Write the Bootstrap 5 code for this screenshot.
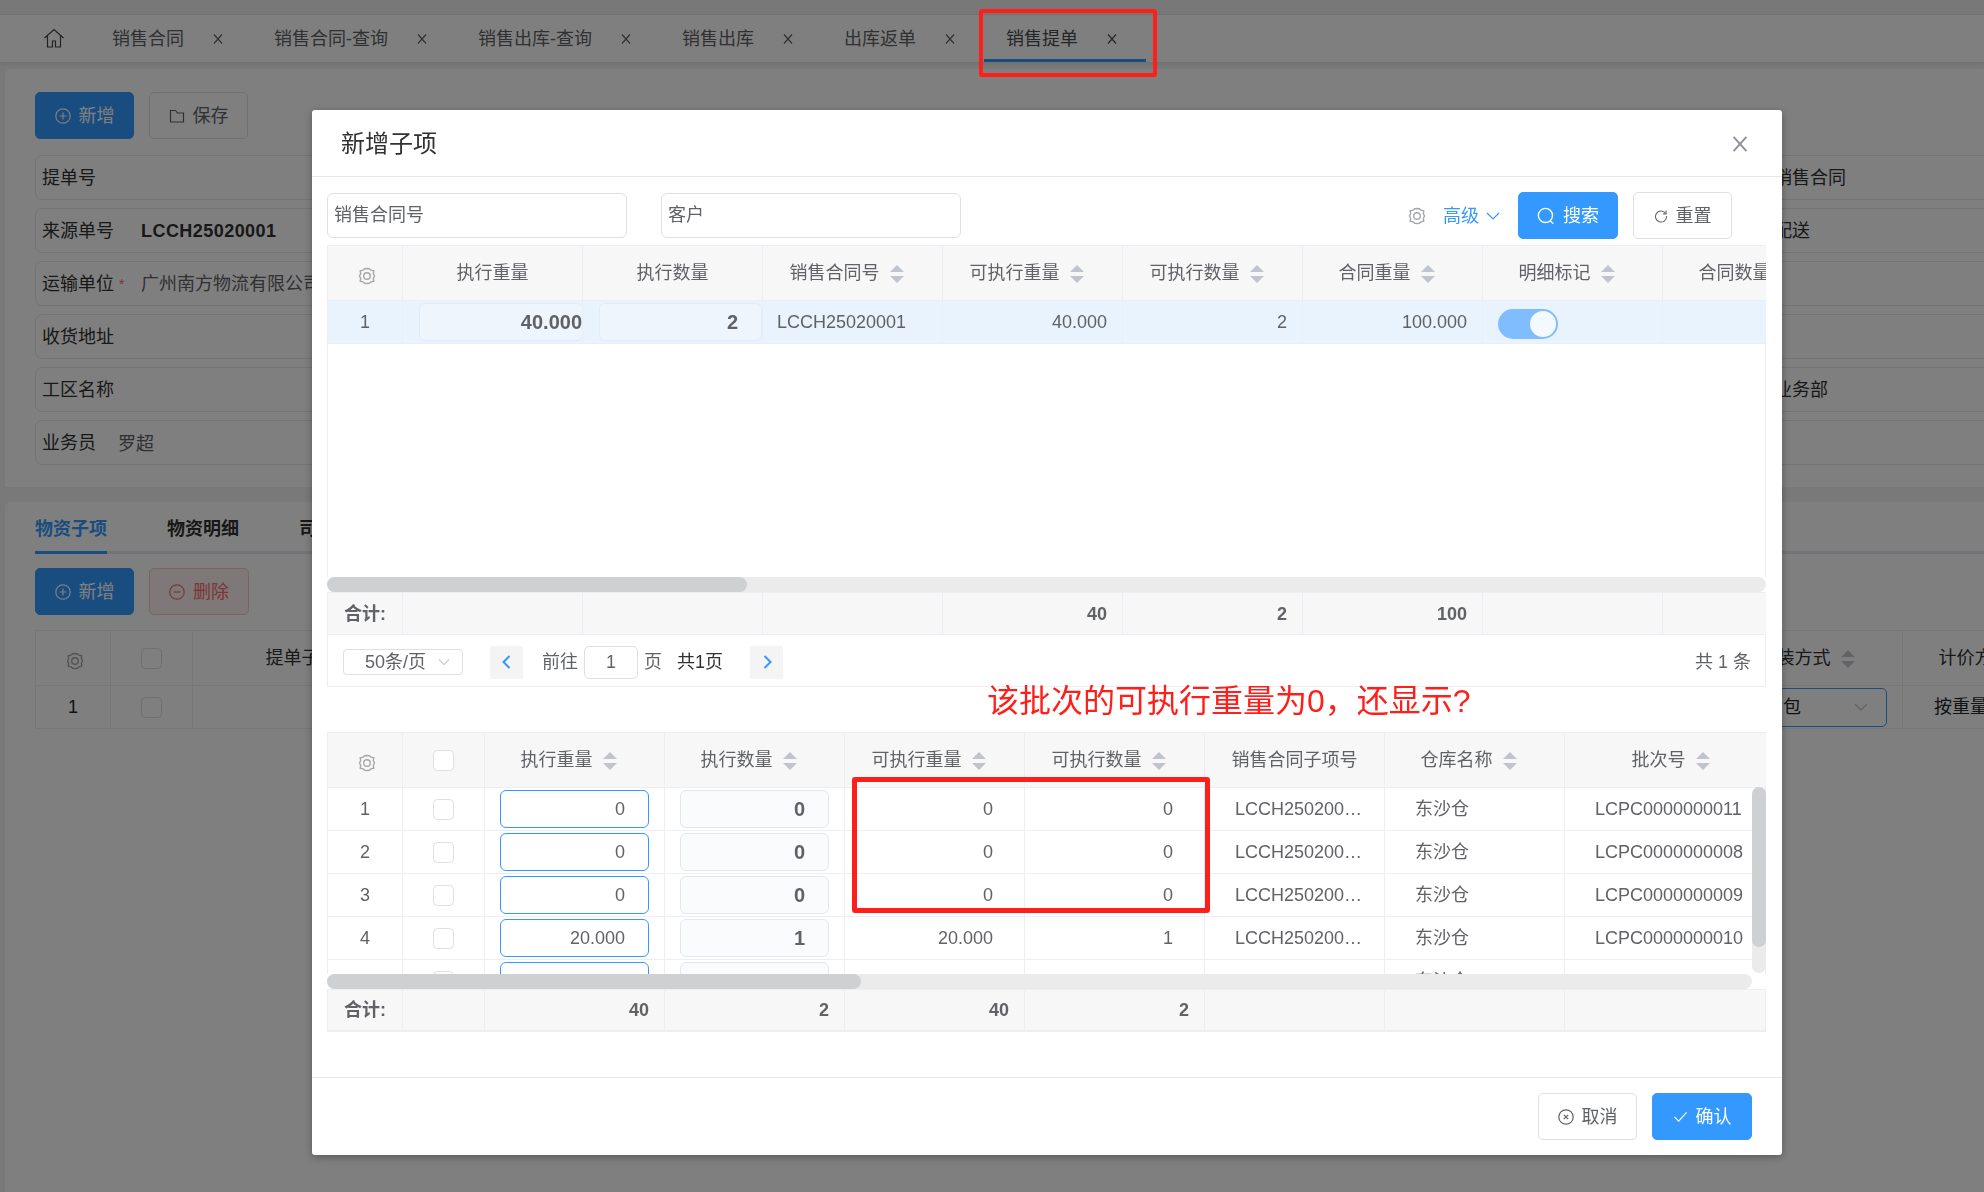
<!DOCTYPE html>
<html lang="zh-CN">
<head>
  <meta charset="UTF-8" />
  <meta name="viewport" content="width=device-width, initial-scale=1.0" />
  <title>销售提单</title>
  <link href="https://cdn.jsdelivr.net/npm/bootstrap@5.3.2/dist/css/bootstrap.min.css" rel="stylesheet">
  <style>
    body {
      font-family: "Liberation Sans", "Noto Sans CJK SC", sans-serif;
      font-size: 18px;
      line-height: 24px;
      color: #606266;
      background: #f0f2f1;
      height: 1192px;
      overflow: hidden;
    }
    svg.ico { fill: none; stroke: currentColor; stroke-width: 1.2; flex: none; }

    /* page behind the dialog */
    .top-strip { height: 15px; background: #f1f1f1; border-bottom: 1px solid #e6e6e6; }
    .page-tabs { height: 47px; padding-left: 43px; background: #fff; box-shadow: 0 2px 4px rgba(0,0,0,.08); flex-wrap: nowrap; align-items: stretch; }
    .page-tabs .home-ico { width: 22px; height: 22px; margin: 12px 25px 0 0; color: #444; }
    .page-tabs .nav-link { display: flex; align-items: center; height: 47px; padding: 0 29px 0 22px; color: #606266; }
    .page-tabs .nav-link svg { margin-left: 29px; width: 10px; height: 10px; }
    .page-tabs .nav-link.active { border-bottom: 3px solid #3399ff; padding-top: 3px; color: #4a4c50; }
    .sheet { margin-left: 5px; background: #fff; border-radius: 6px 0 0 0; }
    .sheet-head { height: 418px; margin-top: 7px; padding: 23px 0 0 30px; }
    .sheet-lines { height: 690px; margin-top: 15px; padding-left: 30px; overflow: hidden; }
    .act-row { display: flex; gap: 15px; }
    .sheet-lines .act-row { margin: 14px 0 15px; }
    .act-btn { display: inline-flex; align-items: center; justify-content: center; gap: 8px; width: 99px; height: 47px; padding: 2px 0 0; font-size: 18px; border-radius: 5px; border: 1px solid #dcdfe6; background: #fff; color: #606266; }
    .act-btn svg { margin-top: -2px; }
    .act-btn.act-sky { background: #3399ff; border-color: #3399ff; color: #fff; }
    .act-btn.act-wide { width: 100px; }
    .act-btn.act-danger { background: #fef0f0; border-color: #fbc4c4; color: #f56c6c; }
    .form-cell { display: flex; align-items: center; height: 45px; margin-bottom: 8px; padding-left: 6px; border: 1px solid #e4e7ed; border-radius: 7px; color: #303133; }
    .form-cell .cell-val { color: #606266; }
    .form-cell .cell-strong { margin-left: 27px; font-weight: 700; letter-spacing: .45px; color: #303133; }
    .form-cell .cell-low { margin: 3px 0 0 22px; }
    .form-left { width: 640px; }
    .form-right { width: 349px; }
    .form-right .form-cell { padding-left: 139px; border-radius: 0; border-width: 1px 0; }
    .star { width: 27px; padding-left: 5px; color: #f56c6c; font-size: 14px; }
    .line-tabs { height: 52px; border-bottom: 3px solid #e4e7ed; flex-wrap: nowrap; }
    .line-tabs .nav-link { padding: 15px 0 0; margin-right: 60px; height: 52px; font-weight: 700; color: #303133; }
    .line-tabs .nav-link.active { color: #3399ff; border-bottom: 3px solid #3399ff; }
    .back-grid { table-layout: fixed; width: 2047px; --bs-table-border-color: #ebeef5; }
    .back-pick { display: flex; align-items: center; justify-content: space-between; height: 39px; margin: 0 15px 0 20px; padding: 0 18px 0 39px; border: 1px solid #3399ff; border-radius: 5px; }
    .back-pick svg { color: #c0c4cc; }
    .cw-a { width: 75px; } .cw-b { width: 82px; } .cw-c { width: 180px; } .cw-d { width: 202px; }
    .cw-e { width: 236px; } .cw-f { width: 1294px; }

    /* dialog */
    .modal-backdrop.show { opacity: .5; }
    .modal-dialog.bill-dialog { width: 1470px; max-width: none; margin: 110px 0 0 312px; }
    .bill-dialog .modal-content { height: 1045px; border: 0; border-radius: 3px; box-shadow: 0 2px 8px rgba(0,0,0,.3); }
    .bill-dialog .modal-header { height: 67px; padding: 2px 34px 0 29px; border-bottom: 1px solid #e4e7ed; }
    .bill-dialog .modal-title { font-size: 24px; font-weight: 400; line-height: 32px; color: #303133; }
    .bill-dialog .modal-body { padding: 15px 16px 0 15px; }
    .bill-dialog .modal-footer { height: 78px; padding: 0 30px 0 0; border-top: 1px solid #e4e7ed; gap: 15px; }
    .bill-dialog .modal-footer > * { margin: 0; }
    .dlg-close { width: 16px; height: 16px; color: #8d9095; }
    .query-bar { height: 47px; margin-bottom: 6px; padding-right: 34px; }
    .query-input { width: 300px; height: 45px; padding: 0 6px; font-size: 18px; border: 1px solid #dcdfe6; border-radius: 6px; color: #606266; }
    .query-input + .query-input { margin-left: 34px; }
    .query-input::placeholder { color: #606266; opacity: 1; }
    .query-more { margin-left: 17px; color: #3399ff; }
    svg.query-more { margin-left: 7px; margin-right: 18px; }
    .query-bar .act-btn + .act-btn { margin-left: 15px; }
    svg.ico.gear { width: 18px; height: 18px; color: #a6a8ab; stroke-width: 1.4; }
    th svg.ico.gear { margin: 3px 0 0 3px; vertical-align: middle; }

    .grid-clip { overflow: hidden; position: relative; box-shadow: inset 1px 0 #ebeef5, inset -1px 0 #ebeef5; }
    .grid-clip.upper { height: 332px; }
    .grid-clip.lower { height: 242px; }
    .data-grid { table-layout: fixed; margin: 0; color: #606266; --bs-table-color: #606266; --bs-table-border-color: #ebeef5; }
    .upper .data-grid, .upper-sum .data-grid { width: 1515px; }
    .lower .data-grid, .lower-sum .data-grid { width: 1439px; }
    .data-grid th, .back-grid th { height: 55px; padding: 0; font-weight: 400; text-align: center; vertical-align: middle; background: #f7f7f7; color: #606266; }
    .data-grid th.th-batch { padding-left: 22px; }
    .back-grid th { background: #fff; color: #303133; }
    .data-grid td, .back-grid td { height: 43px; padding: 0 15px; vertical-align: middle; text-align: right; }
    .data-grid td.t-c, .back-grid td.t-c { padding: 0; text-align: center; }
    .data-grid td.t-l { padding: 0 20px 0 30px; text-align: left; }
    .back-grid td.cell-far { padding-left: 31px; text-align: left; }
    .upper tr.row-on td { background: #e9f3fd; }
    .upper tr.row-on td.pad-l { padding-left: 14px; text-align: left; }
    .lower td.pad-w { padding-right: 31px; }
    .sort { display: inline-flex; flex-direction: column; gap: 4px; margin: 0 12px 0 10px; vertical-align: middle; }
    .sort::before, .sort::after { content: ""; border: solid transparent; border-width: 0 7px; }
    .sort::before { border-bottom: 7px solid #c0c4cc; }
    .sort::after { border-top: 7px solid #c0c4cc; }
    .cell-input { height: 38px; padding: 0 23px 0 0; font-size: 18px; text-align: right; border-radius: 6px; color: #606266; }
    .cell-input.in-blue { border-color: #3399ff; }
    .cell-input.in-mute { border-color: #e4e7ed; background: #fafbfd; font-size: 20px; font-weight: 700; }
    .cell-input.in-row { width: calc(100% - 16px); margin-left: 16px; border-color: #e2ecf6; background: #eef5fd; font-size: 20px; font-weight: 700; }
    .cell-input.in-row.in-tight { width: calc(100% - 15px); padding-right: 0; }
    .cell-chk { width: 21px; height: 21px; margin: 2px 0 0; border-color: #dcdfe6; border-radius: 3px; }
    .tgl { display: block; position: relative; width: 60px; height: 30px; margin: 4px 0 0 1px; border-radius: 15px; background: #80bdff; }
    .tgl::after { content: ""; position: absolute; top: 2px; right: 2px; width: 26px; height: 26px; border-radius: 50%; background: #f4f9ff; }
    .bar-x { height: 15px; border-radius: 8px; background: #ebebeb; }
    .bar-x > div { height: 15px; border-radius: 8px; background: #cfd0d2; }
    .upper-bar > div { width: 420px; }
    .lower-bar { margin-right: 14px; }
    .lower-bar > div { width: 534px; }
    .bar-y { position: absolute; top: 55px; right: 0; width: 14px; height: 186px; border-radius: 7px; background: #ebebeb; }
    .bar-y > div { height: 160px; border-radius: 7px; background: #cfd0d2; }
    .sum-clip { overflow: hidden; }
    .sum-clip td { height: 42px; background: #f7f7f7; font-weight: 700; }
    .data-grid td.sum-head { padding: 0 0 0 16px; text-align: left; white-space: nowrap; }
    .lower-sum { border: solid #ebeef5; border-width: 0 1px 1px 0; }
    .lower-sum td { height: 41px; }
    .pager { height: 52px; padding: 3px 14px 0 15px; border: solid #ebeef5; border-width: 0 1px 1px 1px; }
    .pager-size { width: 120px; height: 26px; padding: 0 12px 0 21px; border: 1px solid #dcdfe6; border-radius: 4px; line-height: 24px; }
    .pager-size svg { width: 12px; height: 12px; color: #c0c4cc; }
    .pager-btn { display: flex; align-items: center; justify-content: center; width: 33px; height: 33px; margin-left: 27px; background: #f4f4f5; border-radius: 2px; color: #3399ff; }
    .pager-btn svg { width: 16px; height: 16px; stroke-width: 2; }
    .pager-lead { margin-left: 19px; }
    .pager-num { width: 54px; height: 33px; margin: 0 6px; padding: 0; font-size: 18px; text-align: center; border: 1px solid #dcdfe6; border-radius: 5px; color: #606266; }
    .pager-dark { margin-left: 15px; color: #303133; }
    .note-red { height: 45px; padding-left: 660px; font-size: 32px; line-height: 28px; color: #ff1f1a; white-space: nowrap; }

    /* the red frames drawn on top of the screenshot */
    .anno-tab, .anno-zero { position: fixed; z-index: 2000; border: 4px solid #ff1f1a; border-radius: 3px; }
    .anno-tab { left: 979px; top: 9px; width: 178px; height: 68px; }
    .anno-zero { left: 852px; top: 777px; width: 358px; height: 136px; border-width: 5px; }
  </style>
</head>
<body>
  <svg width="0" height="0" class="position-absolute">
    <symbol id="i-home" viewBox="0 0 22 22"><path d="M1.5 11 11 2.5l9.5 8.500M4.500 9v11h5v-6h3v6h5V9" /></symbol>
    <symbol id="i-x" viewBox="0 0 10 10"><path d="M1 .5l8 9M9 .5l-8 9" /></symbol>
    <symbol id="i-gear" viewBox="0 0 18 18"><path d="M16.500 9l-1.200 2.400.500 2.900-2.900.500L11.400 16.300 9 16.500l-2.400-.2-1.500-1.500-2.900-.5.500-2.900L1.500 9l1.200-2.400-.500-2.900 2.900-.500L6.600 1.700 9 1.500l2.400.2 1.500 1.500 2.900.5-.5 2.900z" /><circle cx="9" cy="9" r="3.300" /></symbol>
    <symbol id="i-plus" viewBox="0 0 16 16"><circle cx="8" cy="8" r="7.200" /><path d="M8 4.500v7M4.500 8h7" /></symbol>
    <symbol id="i-minus" viewBox="0 0 16 16"><circle cx="8" cy="8" r="7.200" /><path d="M4.500 8h7" /></symbol>
    <symbol id="i-close-c" viewBox="0 0 16 16"><circle cx="8" cy="8" r="7.200" /><path d="M5.800 5.800l4.400 4.400M10.200 5.800l-4.400 4.400" /></symbol>
    <symbol id="i-folder" viewBox="0 0 16 16"><path d="M1.500 2.500h5l2 2.500h6v9h-13z" /></symbol>
    <symbol id="i-search" viewBox="0 0 16 16"><circle cx="7.500" cy="7.500" r="6.300" /><path d="M11.800 12.300l2.700 2.700" /></symbol>
    <symbol id="i-redo" viewBox="0 0 16 16"><path d="M13.500 5.500A6.300 6.300 0 1 0 14.300 8" /><path d="M13.800 1.800v3.900H10" /></symbol>
    <symbol id="i-down" viewBox="0 0 14 14"><path d="M1 4l6 6 6-6" /></symbol>
    <symbol id="i-left" viewBox="0 0 16 16"><path d="M10.500 2 4.500 8l6 6" /></symbol>
    <symbol id="i-right" viewBox="0 0 16 16"><path d="M5.500 2l6 6-6 6" /></symbol>
    <symbol id="i-check" viewBox="0 0 16 16"><path d="M1.500 8.500l4.500 4.500 8.500-9.500" /></symbol>
  </svg>

  <div class="top-strip"></div>
  <ul class="nav page-tabs">
    <li><svg class="ico home-ico"><use href="#i-home" /></svg></li>
    <li class="nav-item"><a class="nav-link" href="#">销售合同<svg class="ico"><use href="#i-x" /></svg></a></li>
    <li class="nav-item"><a class="nav-link" href="#">销售合同-查询<svg class="ico"><use href="#i-x" /></svg></a></li>
    <li class="nav-item"><a class="nav-link" href="#">销售出库-查询<svg class="ico"><use href="#i-x" /></svg></a></li>
    <li class="nav-item"><a class="nav-link" href="#">销售出库<svg class="ico"><use href="#i-x" /></svg></a></li>
    <li class="nav-item"><a class="nav-link" href="#">出库返单<svg class="ico"><use href="#i-x" /></svg></a></li>
    <li class="nav-item"><a class="nav-link active" href="#">销售提单<svg class="ico"><use href="#i-x" /></svg></a></li>
  </ul>

  <div class="sheet sheet-head">
    <div class="act-row mb-3">
      <button class="btn act-btn act-sky" type="button"><svg class="ico" width="16" height="16"><use href="#i-plus" /></svg>新增</button>
      <button class="btn act-btn" type="button"><svg class="ico" width="16" height="16"><use href="#i-folder" /></svg>保存</button>
    </div>
    <div class="d-flex justify-content-between">
      <div class="form-left">
        <div class="form-cell">提单号</div>
        <div class="form-cell">来源单号<span class="cell-strong">LCCH25020001</span></div>
        <div class="form-cell">运输单位<span class="star">*</span><span class="cell-val">广州南方物流有限公司</span></div>
        <div class="form-cell">收货地址</div>
        <div class="form-cell">工区名称</div>
        <div class="form-cell">业务员<span class="cell-val cell-low">罗超</span></div>
      </div>
      <div class="form-right">
        <div class="form-cell">销售合同</div>
        <div class="form-cell">配送</div>
        <div class="form-cell"></div>
        <div class="form-cell"></div>
        <div class="form-cell">业务部</div>
        <div class="form-cell"></div>
      </div>
    </div>
  </div>

  <div class="sheet sheet-lines">
    <ul class="nav line-tabs">
      <li class="nav-item"><a class="nav-link active" href="#">物资子项</a></li>
      <li class="nav-item"><a class="nav-link" href="#">物资明细</a></li>
      <li class="nav-item"><a class="nav-link" href="#">司机信息</a></li>
    </ul>
    <div class="act-row">
      <button class="btn act-btn act-sky" type="button"><svg class="ico" width="16" height="16"><use href="#i-plus" /></svg>新增</button>
      <button class="btn act-btn act-danger act-wide" type="button"><svg class="ico" width="16" height="16"><use href="#i-minus" /></svg>删除</button>
    </div>
    <table class="table table-bordered back-grid">
      <colgroup><col class="cw-a"><col class="cw-b"><col class="cw-e"><col class="cw-f"><col class="cw-c"><col class="cw-c"></colgroup>
      <thead>
        <tr>
          <th><svg class="ico gear"><use href="#i-gear" /></svg></th>
          <th><input class="form-check-input cell-chk" type="checkbox"></th>
          <th>提单子项号</th>
          <th></th>
          <th>包装方式<span class="sort"></span></th>
          <th>计价方式<span class="sort"></span></th>
        </tr>
      </thead>
      <tbody>
        <tr>
          <td class="t-c">1</td>
          <td class="t-c"><input class="form-check-input cell-chk" type="checkbox"></td>
          <td></td>
          <td></td>
          <td class="t-c"><div class="back-pick">包<svg class="ico" width="14" height="14"><use href="#i-down" /></svg></div></td>
          <td class="cell-far">按重量</td>
        </tr>
      </tbody>
    </table>
  </div>

  <div class="modal-backdrop show"></div>
  <div class="modal d-block" tabindex="-1">
    <div class="modal-dialog bill-dialog">
      <div class="modal-content">
        <div class="modal-header justify-content-between">
          <h5 class="modal-title">新增子项</h5>
          <svg class="ico dlg-close"><use href="#i-x" /></svg>
        </div>
        <div class="modal-body">
          <div class="query-bar d-flex align-items-center">
            <input class="form-control query-input" placeholder="销售合同号">
            <input class="form-control query-input" placeholder="客户">
            <svg class="ico gear ms-auto"><use href="#i-gear" /></svg>
            <span class="query-more">高级</span>
            <svg class="ico query-more" width="14" height="14"><use href="#i-down" /></svg>
            <button class="btn act-btn act-sky act-wide" type="button"><svg class="ico" width="18" height="18"><use href="#i-search" /></svg>搜索</button>
            <button class="btn act-btn" type="button"><svg class="ico" width="14" height="14"><use href="#i-redo" /></svg>重置</button>
          </div>

          <div class="grid-clip upper">
            <table class="table table-bordered data-grid">
              <colgroup><col class="cw-a"><col class="cw-c"><col class="cw-c"><col class="cw-c"><col class="cw-c"><col class="cw-c"><col class="cw-c"><col class="cw-c"><col class="cw-c"></colgroup>
              <thead>
                <tr>
                  <th><svg class="ico gear"><use href="#i-gear" /></svg></th>
                  <th>执行重量</th>
                  <th>执行数量</th>
                  <th>销售合同号<span class="sort"></span></th>
                  <th>可执行重量<span class="sort"></span></th>
                  <th>可执行数量<span class="sort"></span></th>
                  <th>合同重量<span class="sort"></span></th>
                  <th>明细标记<span class="sort"></span></th>
                  <th>合同数量<span class="sort"></span></th>
                </tr>
              </thead>
              <tbody>
                <tr class="row-on">
                  <td class="t-c">1</td>
                  <td class="p-0"><input class="form-control cell-input in-row in-tight" value="40.000"></td>
                  <td class="p-0"><input class="form-control cell-input in-row" value="2"></td>
                  <td class="pad-l">LCCH25020001</td>
                  <td>40.000</td>
                  <td>2</td>
                  <td>100.000</td>
                  <td class="pad-l"><span class="tgl"></span></td>
                  <td></td>
                </tr>
              </tbody>
            </table>
          </div>
          <div class="bar-x upper-bar"><div></div></div>
          <div class="sum-clip upper-sum">
            <table class="table table-bordered data-grid">
              <colgroup><col class="cw-a"><col class="cw-c"><col class="cw-c"><col class="cw-c"><col class="cw-c"><col class="cw-c"><col class="cw-c"><col class="cw-c"><col class="cw-c"></colgroup>
              <tbody>
                <tr><td class="sum-head">合计:</td><td></td><td></td><td></td><td>40</td><td>2</td><td>100</td><td></td><td></td></tr>
              </tbody>
            </table>
          </div>
          <div class="pager d-flex align-items-center">
            <div class="pager-size d-flex align-items-center justify-content-between">50条/页<svg class="ico"><use href="#i-down" /></svg></div>
            <span class="pager-btn"><svg class="ico"><use href="#i-left" /></svg></span>
            <span class="pager-lead">前往</span>
            <input class="form-control pager-num" value="1">
            <span>页</span>
            <span class="pager-dark">共1页</span>
            <span class="pager-btn"><svg class="ico"><use href="#i-right" /></svg></span>
            <span class="ms-auto">共 1 条</span>
          </div>

          <div class="note-red">该批次的可执行重量为0，还显示?</div>

          <div class="grid-clip lower">
            <table class="table table-bordered data-grid">
              <colgroup><col class="cw-a"><col class="cw-b"><col class="cw-c"><col class="cw-c"><col class="cw-c"><col class="cw-c"><col class="cw-c"><col class="cw-c"><col class="cw-d"></colgroup>
              <thead>
                <tr>
                  <th><svg class="ico gear"><use href="#i-gear" /></svg></th>
                  <th><input class="form-check-input cell-chk" type="checkbox"></th>
                  <th>执行重量<span class="sort"></span></th>
                  <th>执行数量<span class="sort"></span></th>
                  <th>可执行重量<span class="sort"></span></th>
                  <th>可执行数量<span class="sort"></span></th>
                  <th>销售合同子项号</th>
                  <th>仓库名称<span class="sort"></span></th>
                  <th class="th-batch">批次号<span class="sort"></span></th>
                </tr>
              </thead>
              <tbody>
                <tr>
                  <td class="t-c">1</td>
                  <td class="t-c"><input class="form-check-input cell-chk" type="checkbox"></td>
                  <td><input class="form-control cell-input in-blue" value="0"></td>
                  <td><input class="form-control cell-input in-mute" value="0"></td>
                  <td class="pad-w">0</td>
                  <td class="pad-w">0</td>
                  <td class="t-l text-truncate">LCCH25020001001</td>
                  <td class="t-l">东沙仓</td>
                  <td class="t-l">LCPC0000000011</td>
                </tr>
                <tr>
                  <td class="t-c">2</td>
                  <td class="t-c"><input class="form-check-input cell-chk" type="checkbox"></td>
                  <td><input class="form-control cell-input in-blue" value="0"></td>
                  <td><input class="form-control cell-input in-mute" value="0"></td>
                  <td class="pad-w">0</td>
                  <td class="pad-w">0</td>
                  <td class="t-l text-truncate">LCCH25020001001</td>
                  <td class="t-l">东沙仓</td>
                  <td class="t-l">LCPC0000000008</td>
                </tr>
                <tr>
                  <td class="t-c">3</td>
                  <td class="t-c"><input class="form-check-input cell-chk" type="checkbox"></td>
                  <td><input class="form-control cell-input in-blue" value="0"></td>
                  <td><input class="form-control cell-input in-mute" value="0"></td>
                  <td class="pad-w">0</td>
                  <td class="pad-w">0</td>
                  <td class="t-l text-truncate">LCCH25020001001</td>
                  <td class="t-l">东沙仓</td>
                  <td class="t-l">LCPC0000000009</td>
                </tr>
                <tr>
                  <td class="t-c">4</td>
                  <td class="t-c"><input class="form-check-input cell-chk" type="checkbox"></td>
                  <td><input class="form-control cell-input in-blue" value="20.000"></td>
                  <td><input class="form-control cell-input in-mute" value="1"></td>
                  <td class="pad-w">20.000</td>
                  <td class="pad-w">1</td>
                  <td class="t-l text-truncate">LCCH25020001001</td>
                  <td class="t-l">东沙仓</td>
                  <td class="t-l">LCPC0000000010</td>
                </tr>
                <tr>
                  <td class="t-c">5</td>
                  <td class="t-c"><input class="form-check-input cell-chk" type="checkbox"></td>
                  <td><input class="form-control cell-input in-blue" value="20.000"></td>
                  <td><input class="form-control cell-input in-mute" value="1"></td>
                  <td class="pad-w">20.000</td>
                  <td class="pad-w">1</td>
                  <td class="t-l text-truncate">LCCH25020001001</td>
                  <td class="t-l">东沙仓</td>
                  <td class="t-l">LCPC0000000012</td>
                </tr>
              </tbody>
            </table>
            <div class="bar-y"><div></div></div>
          </div>
          <div class="bar-x lower-bar"><div></div></div>
          <div class="sum-clip lower-sum">
            <table class="table table-bordered data-grid">
              <colgroup><col class="cw-a"><col class="cw-b"><col class="cw-c"><col class="cw-c"><col class="cw-c"><col class="cw-c"><col class="cw-c"><col class="cw-c"><col class="cw-d"></colgroup>
              <tbody>
                <tr><td class="sum-head">合计:</td><td></td><td>40</td><td>2</td><td>40</td><td>2</td><td></td><td></td><td></td></tr>
              </tbody>
            </table>
          </div>
        </div>
        <div class="modal-footer">
          <button class="btn act-btn" type="button"><svg class="ico" width="16" height="16"><use href="#i-close-c" /></svg>取消</button>
          <button class="btn act-btn act-sky act-wide" type="button"><svg class="ico" width="15" height="15"><use href="#i-check" /></svg>确认</button>
        </div>
      </div>
    </div>
  </div>

  <div class="anno-tab"></div>
  <div class="anno-zero"></div>

  <script src="https://cdn.jsdelivr.net/npm/bootstrap@5.3.2/dist/js/bootstrap.bundle.min.js"></script>
</body>
</html>
